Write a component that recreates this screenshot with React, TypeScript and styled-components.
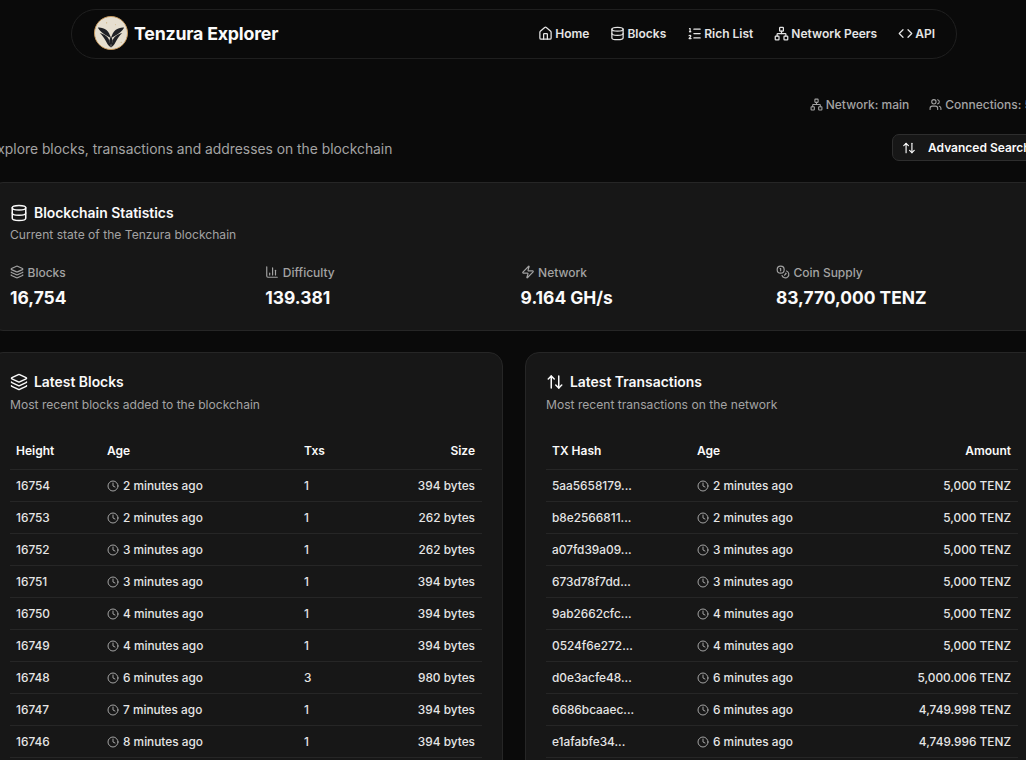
import styled, { createGlobalStyle } from 'styled-components';
import {
  ArrowUpDown,
  ChartColumn,
  Clock,
  Code,
  Coins,
  Database,
  House,
  Layers,
  ListOrdered,
  Network,
  Users,
  Zap,
} from 'lucide-react';
import type { LucideIcon } from 'lucide-react';

const GlobalStyle = createGlobalStyle`
  html, body {
    margin: 0;
    height: 760px;
    overflow: hidden;
    background: #0a0a0a;
    color: #fafafa;
    font-family: Inter, "Liberation Sans", sans-serif;
  }
`;

/* The page in the shot is scrolled sideways, so the shell starts left of the viewport */
const Shell = styled.div`
  width: 1050px;
  margin-left: -11px;
  padding-top: 9px;
`;

const NavBar = styled.header`
  width: 886px;
  height: 50px;
  box-sizing: border-box;
  margin: 0 auto;
  padding: 0 21px 2px 22px;
  display: flex;
  align-items: center;
  justify-content: space-between;
  border: 1px solid #1f1f1f;
  border-radius: 25px;
`;

const Brand = styled.div`
  display: flex;
  align-items: center;
  gap: 6px;
  font-size: 17.75px;
  font-weight: 700;
  letter-spacing: -0.2px;
`;

const NavLinks = styled.nav`
  display: flex;
  align-items: center;
  gap: 21px;
`;

const NavLink = styled.a`
  display: flex;
  align-items: center;
  gap: 2px;
  font-size: 12px;
  font-weight: 600;
  color: #e5e5e5;
`;

const StatusRow = styled.div`
  margin-top: 37px;
  height: 16px;
  display: flex;
  justify-content: flex-end;
  gap: 20px;
  padding-right: 7px;
`;

const StatusItem = styled.span`
  display: flex;
  align-items: center;
  gap: 3px;
  font-size: 12px;
  font-weight: 500;
  color: #a3a3a3;
`;

const IntroRow = styled.div`
  margin-top: 22px;
  height: 27px;
  display: flex;
  align-items: center;
  justify-content: space-between;
`;

const Intro = styled.p`
  margin: 0;
  padding-top: 3px;
  font-size: 13.83px;
  color: #a3a3a3;
`;

const SearchButton = styled.button`
  width: 147px;
  height: 27px;
  box-sizing: border-box;
  padding: 0 0 0 9px;
  display: flex;
  align-items: center;
  gap: 12px;
  background: #171717;
  border: 1px solid #2e2e2e;
  border-radius: 7px;
  color: #fafafa;
  font-family: inherit;
  font-size: 12px;
  font-weight: 600;
  white-space: nowrap;
`;

const Card = styled.section`
  box-sizing: border-box;
  background: #171717;
  border: 1px solid #262626;
  border-radius: 14px;
  padding: 20px;
`;

const CardTitle = styled.h2`
  margin: 0;
  display: flex;
  align-items: center;
  gap: 6px;
  height: 18px;
  font-size: 13.9px;
  font-weight: 600;
`;

const CardHint = styled.p`
  margin: 6px 0 0;
  height: 16px;
  font-size: 12.1px;
  line-height: 16px;
  color: #a3a3a3;
`;

const StatsCard = styled(Card)`
  margin-top: 21px;
  height: 149px;
  padding-top: 21px;

  ${CardHint} {
    margin-top: 5px;
  }
`;

const StatGrid = styled.div`
  margin-top: 21px;
  display: grid;
  grid-template-columns: repeat(4, 255.3px);
`;

const StatLabel = styled.div`
  display: flex;
  align-items: center;
  gap: 3.5px;
  height: 16px;
  font-size: 12px;
  font-weight: 500;
  color: #a3a3a3;
`;

const StatValue = styled.div`
  margin-top: 6px;
  font-size: 17.4px;
  line-height: 24px;
  font-weight: 700;
`;

const Panels = styled.div`
  margin-top: 21px;
  display: grid;
  grid-template-columns: 514px 514px;
  gap: 22px;
`;

const TableWrap = styled.table`
  margin-top: 22px;
  width: 100%;
  table-layout: fixed;
  border-collapse: collapse;
`;

const HeadCell = styled.th<{ $width?: number; $end?: boolean }>`
  width: ${(p) => (p.$width ? `${p.$width}px` : 'auto')};
  height: 34px;
  padding: 0 7px 2px 6px;
  box-sizing: border-box;
  text-align: ${(p) => (p.$end ? 'right' : 'left')};
  font-size: 12px;
  font-weight: 600;
  color: #fafafa;
  border-bottom: 1px solid #262626;
`;

const Cell = styled.td<{ $end?: boolean }>`
  height: 32px;
  padding: 1px 7px 0 6px;
  box-sizing: border-box;
  text-align: ${(p) => (p.$end ? 'right' : 'left')};
  font-size: 11.85px;
  font-weight: 500;
  color: #e5e5e5;
  white-space: nowrap;
  border-bottom: 1px solid #262626;
`;

const AgeLabel = styled.span`
  display: flex;
  align-items: center;
  gap: 4px;
`;

const MutedClock = styled(Clock)`
  color: #a3a3a3;
`;

const blocks = [
  ['16754', '2 minutes ago', '1', '394 bytes'],
  ['16753', '2 minutes ago', '1', '262 bytes'],
  ['16752', '3 minutes ago', '1', '262 bytes'],
  ['16751', '3 minutes ago', '1', '394 bytes'],
  ['16750', '4 minutes ago', '1', '394 bytes'],
  ['16749', '4 minutes ago', '1', '394 bytes'],
  ['16748', '6 minutes ago', '3', '980 bytes'],
  ['16747', '7 minutes ago', '1', '394 bytes'],
  ['16746', '8 minutes ago', '1', '394 bytes'],
];

const transactions = [
  ['5aa5658179...', '2 minutes ago', '5,000 TENZ'],
  ['b8e2566811...', '2 minutes ago', '5,000 TENZ'],
  ['a07fd39a09...', '3 minutes ago', '5,000 TENZ'],
  ['673d78f7dd...', '3 minutes ago', '5,000 TENZ'],
  ['9ab2662cfc...', '4 minutes ago', '5,000 TENZ'],
  ['0524f6e272...', '4 minutes ago', '5,000 TENZ'],
  ['d0e3acfe48...', '6 minutes ago', '5,000.006 TENZ'],
  ['6686bcaaec...', '6 minutes ago', '4,749.998 TENZ'],
  ['e1afabfe34...', '6 minutes ago', '4,749.996 TENZ'],
];

const navItems: [LucideIcon, string][] = [
  [House, 'Home'],
  [Database, 'Blocks'],
  [ListOrdered, 'Rich List'],
  [Network, 'Network Peers'],
  [Code, 'API'],
];

const stats: [LucideIcon, string, string][] = [
  [Layers, 'Blocks', '16,754'],
  [ChartColumn, 'Difficulty', '139.381'],
  [Zap, 'Network', '9.164 GH/s'],
  [Coins, 'Coin Supply', '83,770,000 TENZ'],
];

const WING =
  'M4 12C10 11.5 16 15 17 22.5 14.5 20.5 8 18.5 4 12zM6 17.5C11 19 15 21.5 16 26 16.5 28.5 17 30.5 17.5 32.5 14.5 30.5 13 27.5 12 25.5 10.5 22.5 8.5 20 6 17.5z';

function Logo(): React.JSX.Element {
  return (
    <svg width="34" height="34" viewBox="0 0 35 35">
      <circle cx="17.5" cy="17.5" r="17" fill="#e6dfd0" stroke="#c79a5e" strokeWidth="1" />
      <circle cx="13" cy="7" r="0.6" fill="#c9a86a" />
      <circle cx="22" cy="9" r="0.5" fill="#c9a86a" />
      <circle cx="28" cy="27" r="0.6" fill="#c9a86a" />
      <path d={WING} fill="#1f2126" />
      <path d={WING} fill="#1f2126" transform="matrix(-1 0 0 1 35 0)" />
      <path d="M17.5 20l1.8 5.5-1.8 7-1.8-7z" fill="#1f2126" />
    </svg>
  );
}

function Age({ text }: { text: string }): React.JSX.Element {
  return (
    <AgeLabel>
      <MutedClock size={12} />
      {text}
    </AgeLabel>
  );
}

export default function App(): React.JSX.Element {
  return (
    <Shell>
      <GlobalStyle />
      <NavBar>
        <Brand>
          <Logo />
          Tenzura Explorer
        </Brand>
        <NavLinks>
          {navItems.map(([Icon, label]) => (
            <NavLink key={label}>
              <Icon size={15} />
              {label}
            </NavLink>
          ))}
        </NavLinks>
      </NavBar>
      <StatusRow>
        <StatusItem>
          <Network size={13} />
          Network: main
        </StatusItem>
        <StatusItem>
          <Users size={13} />
          Connections: 5
        </StatusItem>
      </StatusRow>
      <IntroRow>
        <Intro>Explore blocks, transactions and addresses on the blockchain</Intro>
        <SearchButton>
          <ArrowUpDown size={14} />
          Advanced Search
        </SearchButton>
      </IntroRow>
      <StatsCard>
        <CardTitle>
          <Database size={18} />
          Blockchain Statistics
        </CardTitle>
        <CardHint>Current state of the Tenzura blockchain</CardHint>
        <StatGrid>
          {stats.map(([Icon, label, value]) => (
            <div key={label}>
              <StatLabel>
                <Icon size={14} />
                {label}
              </StatLabel>
              <StatValue>{value}</StatValue>
            </div>
          ))}
        </StatGrid>
      </StatsCard>
      <Panels>
        <Card>
          <CardTitle>
            <Layers size={18} />
            Latest Blocks
          </CardTitle>
          <CardHint>Most recent blocks added to the blockchain</CardHint>
          <TableWrap>
            <thead>
              <tr>
                <HeadCell $width={91}>Height</HeadCell>
                <HeadCell $width={197}>Age</HeadCell>
                <HeadCell $width={80}>Txs</HeadCell>
                <HeadCell $end>Size</HeadCell>
              </tr>
            </thead>
            <tbody>
              {blocks.map(([height, age, txs, size]) => (
                <tr key={height}>
                  <Cell>{height}</Cell>
                  <Cell>
                    <Age text={age} />
                  </Cell>
                  <Cell>{txs}</Cell>
                  <Cell $end>{size}</Cell>
                </tr>
              ))}
            </tbody>
          </TableWrap>
        </Card>
        <Card>
          <CardTitle>
            <ArrowUpDown size={18} />
            Latest Transactions
          </CardTitle>
          <CardHint>Most recent transactions on the network</CardHint>
          <TableWrap>
            <thead>
              <tr>
                <HeadCell $width={145}>TX Hash</HeadCell>
                <HeadCell $width={170}>Age</HeadCell>
                <HeadCell $end>Amount</HeadCell>
              </tr>
            </thead>
            <tbody>
              {transactions.map(([hash, age, amount]) => (
                <tr key={hash}>
                  <Cell>{hash}</Cell>
                  <Cell>
                    <Age text={age} />
                  </Cell>
                  <Cell $end>{amount}</Cell>
                </tr>
              ))}
            </tbody>
          </TableWrap>
        </Card>
      </Panels>
    </Shell>
  );
}
